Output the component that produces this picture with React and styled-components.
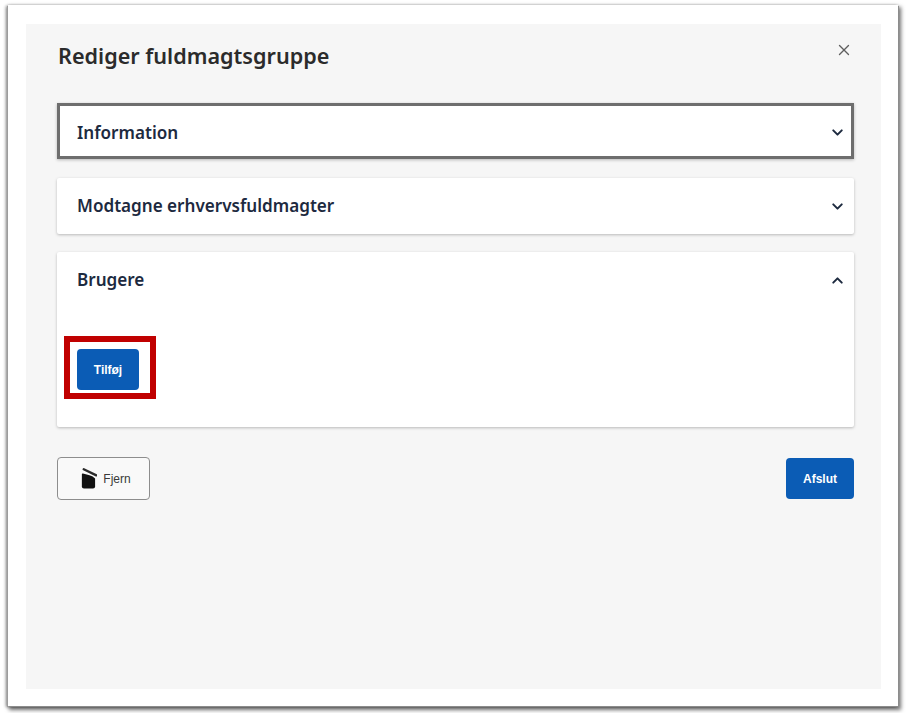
import React from "react";
import styled, { createGlobalStyle } from "styled-components";
import { ChevronDown, ChevronUp, X } from "lucide-react";

const Global = createGlobalStyle`
  html, body { margin: 0; padding: 0; background: #fff; }
  body { min-height: 713px; overflow: hidden; font-family: "Noto Sans", "Open Sans", sans-serif; }
  #root { display: flow-root; height: 713px; }
`;

const Frame = styled.div`
  box-sizing: border-box;
  width: 890px;
  height: 701px;
  margin: 5px 0 0 8px;
  padding: 19px 17px 16px 18px;
  background: #fff;
  box-shadow:
    1px 1px 0 #8c8c8c,
    -1px 1px 0 #9c9c9c,
    2px 3px 4px 1px rgba(0, 0, 0, 0.55),
    -2px 1px 3px rgba(0, 0, 0, 0.45),
    0 -1px 2px rgba(0, 0, 0, 0.08);
`;

const Panel = styled.div`
  box-sizing: border-box;
  height: 665px;
  padding: 0 27px 0 31px;
  background: #f6f6f6;
  display: flex;
  flex-direction: column;
  color: #262626;
`;

const Header = styled.header`
  height: 79px;
  display: flex;
  justify-content: space-between;
  align-items: flex-start;
  margin-left: 1px;
`;

const Title = styled.h1`
  margin: 17px 0 0;
  font-size: 21.6px;
  line-height: 30px;
  font-weight: 600;
  color: #2b2b2b;
`;

const Close = styled.button`
  border: 0;
  background: none;
  padding: 0;
  margin: 17px 1px 0 0;
  width: 18px;
  height: 18px;
  color: #5f5f5f;
  display: flex;
`;

const Stack = styled.div`
  display: flex;
  flex-direction: column;
  gap: 18px;
`;

const Card = styled.section`
  box-sizing: border-box;
  background: #fff;
  border-radius: 2px;
  box-shadow: 0 1px 3px rgba(0, 0, 0, 0.25);
  border: ${(p) => (p.$focused ? "3px solid #6e6e6e" : "0")};
  ${(p) => p.$focused && "border-radius: 0; margin-bottom: 1px;"}
`;

const CardHead = styled.div`
  box-sizing: border-box;
  height: ${(p) => (p.$focused ? "50px" : "56px")};
  padding: ${(p) => (p.$focused ? "2px 5px 0 17px" : "0 8px 2px 20px")};
  display: flex;
  justify-content: space-between;
  align-items: center;
  font-size: 17.1px;
  font-weight: 600;
  color: #1d2a3f;
  ${(p) => !p.$focused && "svg { margin-top: 2px; }"}
`;

const CardBody = styled.div`
  padding: 41px 0 37px 20px;
  display: flex;
`;

const Marked = styled.div`
  position: relative;
  display: flex;
`;

const Marker = styled.span`
  position: absolute;
  inset: -13px -17px -9px -13px;
  border: 6px solid #c00000;
  pointer-events: none;
`;

const Primary = styled.button`
  width: ${(p) => p.$w}px;
  height: ${(p) => p.$h}px;
  border: 0;
  border-radius: 4px;
  background: #0b5cb5;
  color: #fff;
  font-family: "Liberation Sans", Arial, sans-serif;
  font-size: 12px;
  font-weight: 700;
  padding: 0;
`;

const Footer = styled.footer`
  margin-top: 30px;
  display: flex;
  justify-content: space-between;
  align-items: center;
`;

const Secondary = styled.button`
  box-sizing: border-box;
  width: 93px;
  height: 43px;
  border: 1px solid #8d8d8d;
  border-radius: 4px;
  background: #f9f9f9;
  color: #3a3a3a;
  font-family: "Liberation Sans", Arial, sans-serif;
  font-size: 12px;
  display: flex;
  align-items: center;
  justify-content: center;
  gap: 6px;
  padding: 0 0 0 5px;
`;

const TrashIcon = () => (
  <svg width="16" height="21" viewBox="0 0 15 20" aria-hidden="true">
    <path d="M0.7 6 Q0.7 5 1.7 5.2 L8 6.8 L11 8 L13.3 10 V17.5 Q13.3 19.5 11.3 19.5 H2.7 Q0.7 19.5 0.7 17.5 Z" fill="#111" />
    <path d="M2.5 1.2 L14.5 7" stroke="#2a2a2a" strokeWidth="2.2" strokeLinecap="round" fill="none" />
  </svg>
);

export default function App() {
  return (
    <>
      <Global />
      <Frame>
        <Panel>
          <Header>
            <Title>Rediger fuldmagtsgruppe</Title>
            <Close aria-label="Luk"><X size={18} strokeWidth={1.8} /></Close>
          </Header>
          <Stack>
            <Card $focused>
              <CardHead $focused>
                Information
                <ChevronDown size={17} strokeWidth={2.8} />
              </CardHead>
            </Card>
            <Card>
              <CardHead>
                Modtagne erhvervsfuldmagter
                <ChevronDown size={17} strokeWidth={2.8} />
              </CardHead>
            </Card>
            <Card>
              <CardHead>
                Brugere
                <ChevronUp size={17} strokeWidth={2.8} />
              </CardHead>
              <CardBody>
                <Marked>
                  <Primary $w={62} $h={41}>Tilføj</Primary>
                  <Marker />
                </Marked>
              </CardBody>
            </Card>
          </Stack>
          <Footer>
            <Secondary><TrashIcon />Fjern</Secondary>
            <Primary $w={68} $h={41}>Afslut</Primary>
          </Footer>
        </Panel>
      </Frame>
    </>
  );
}
